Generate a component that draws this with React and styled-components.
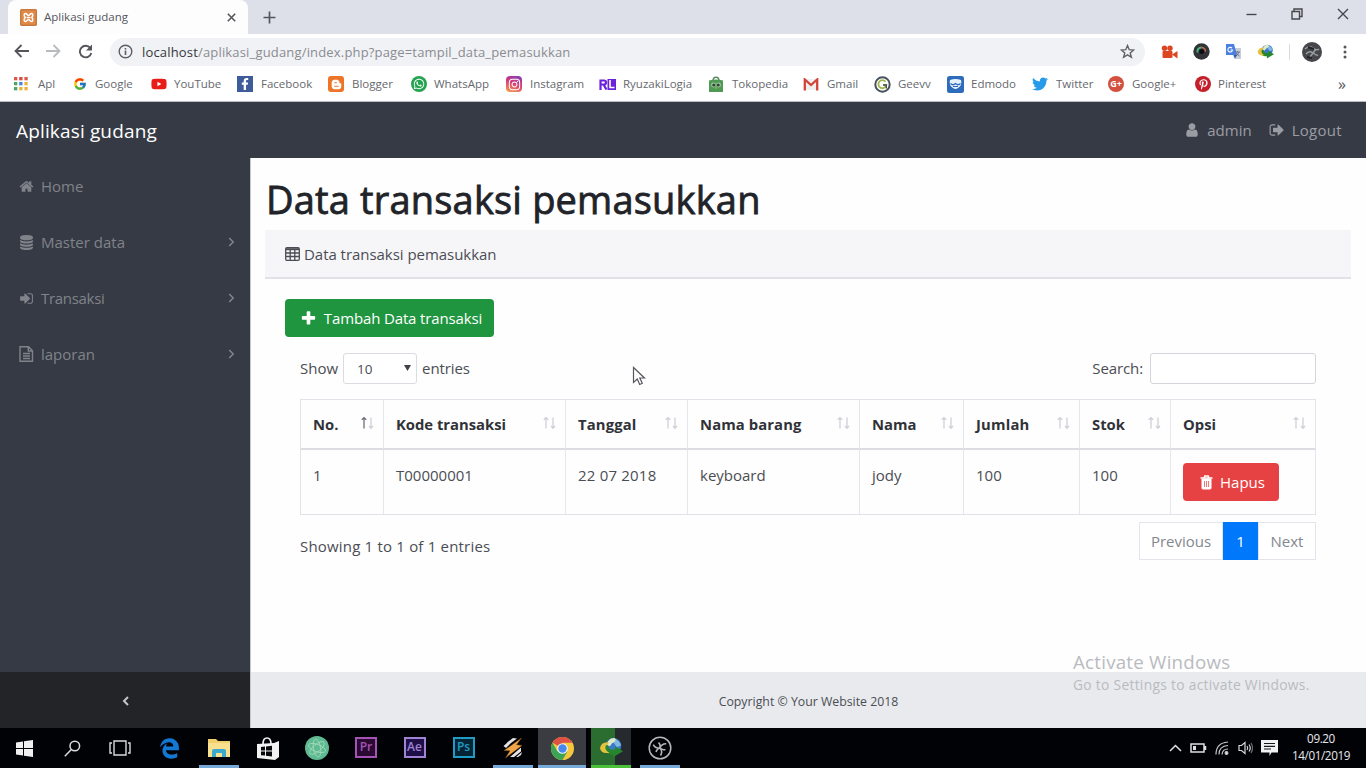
import React from "react";
import styled, { createGlobalStyle, css } from "styled-components";
import { FcGoogle } from "react-icons/fc";
import {
  FaYoutube,
  FaWhatsapp,
  FaInstagram,
  FaTwitter,
  FaPinterestP,
  FaBloggerB,
  FaFacebookF,
  FaEdgeLegacy,
} from "react-icons/fa";

const GlobalStyle = createGlobalStyle`
  * { box-sizing: border-box; }
  html, body { margin: 0; padding: 0; }
  body {
    width: 1366px;
    height: 768px;
    overflow: hidden;
    background: #fff;
    font-family: "Open Sans", "Noto Sans", sans-serif;
    font-size: 15px;
    line-height: 24px;
    color: #4b4d54;
  }
  svg { display: block; flex: none; }
`;

const Screen = styled.div`
  position: relative;
  display: flex;
  flex-direction: column;
  width: 1366px;
  height: 768px;
`;

const Text = styled.span`
  white-space: nowrap;
  letter-spacing: ${(p) => p.$ls || 0}px;
`;

/* ---------- browser chrome ---------- */

const TabStrip = styled.div`
  display: flex;
  height: 34px;
  flex: none;
  background: #dde0e8;
`;

const Tab = styled.div`
  display: flex;
  align-items: center;
  width: 240px;
  margin-left: 8px;
  padding: 0 12px 0 12px;
  border-radius: 8px 8px 0 0;
  background: #fdfdfe;
  font-size: 11.5px;
  color: #55575c;
`;

const TabTitle = styled(Text)`
  flex: 1;
  margin-left: 7px;
`;

const NewTab = styled.div`
  display: flex;
  align-items: center;
  margin-left: 15px;
`;

const WindowButtons = styled.div`
  display: flex;
  align-items: center;
  gap: 34px;
  height: 28px;
  margin-left: auto;
  padding-right: 17px;
`;

const Toolbar = styled.div`
  display: flex;
  align-items: center;
  height: 35px;
  flex: none;
  padding: 0 16px 0 14px;
  background: #fff;
`;

const NavIcons = styled.div`
  display: flex;
  gap: 17px;
  width: 96px;
`;

const AddressBar = styled.div`
  display: flex;
  align-items: center;
  flex: none;
  width: 1035px;
  height: 28px;
  padding: 0 10px 0 8px;
  border-radius: 14px;
  background: #f1f2f5;
  font-size: 13px;
  color: #8a8c92;
`;

const Url = styled(Text)`
  flex: 1;
  margin-left: 9px;
  b { font-weight: 400; color: #35373b; }
`;

const Extensions = styled.div`
  display: flex;
  align-items: center;
  margin-left: 16px;
  gap: 15px;
`;

const Profile = styled.div`
  display: flex;
  align-items: center;
  gap: 21px;
  margin-left: -3px;
`;

const Divider = styled.i`
  width: 1px;
  height: 16px;
  background: #d8dade;
`;

const Bookmarks = styled.div`
  display: flex;
  align-items: center;
  height: 33px;
  flex: none;
  padding: 0 0 2px 13px;
  background: #fff;
  border-bottom: 1px solid #b9bbc1;
  font-size: 11.5px;
  color: #66686e;
`;

const Bookmark = styled.div`
  display: flex;
  align-items: center;
  width: ${(p) => p.$w}px;
  gap: ${(p) => p.$gap || 8}px;
`;

const MoreBookmarks = styled(Text)`
  font-size: 16px;
  color: #54565b;
`;

const Badge = styled.span`
  display: flex;
  align-items: center;
  justify-content: center;
  width: 16px;
  height: 16px;
  border-radius: ${(p) => p.$r || 0}px;
  background: ${(p) => p.$bg};
  color: #fff;
  font-size: ${(p) => p.$fs || 10}px;
  line-height: 16px;
  font-weight: 700;
`;

/* ---------- application ---------- */

const Navbar = styled.header`
  display: flex;
  align-items: center;
  height: 56px;
  flex: none;
  padding: 0 24px 0 16px;
  background: #363a44;
  color: #9b9da4;
`;

const Brand = styled(Text)`
  flex: 1;
  padding-top: 2px;
  font-size: 19px;
  color: #fff;
`;

const NavLink = styled.div`
  display: flex;
  align-items: center;
  gap: 7px;
  margin-left: 17px;
`;

const Body = styled.div`
  display: flex;
  height: 570px;
  flex: none;
`;

const Sidebar = styled.nav`
  display: flex;
  flex-direction: column;
  width: 250px;
  background: #363a44;
  color: #80838a;
`;

const SideItem = styled.div`
  display: flex;
  align-items: center;
  height: 56px;
  padding: 0 15px 0 19px;
  gap: 7px;
  svg:last-child:not(:first-child) { margin-left: auto; }
`;

const Toggler = styled.div`
  display: flex;
  align-items: center;
  justify-content: center;
  height: 56px;
  margin-top: auto;
  padding-top: 2px;
  background: #222428;
  color: #c5c6c9;
`;

const Main = styled.main`
  display: flex;
  flex-direction: column;
  flex: 1;
  border-left: 1px solid #c6c8cf;
  background: #fefefe;
`;

const Title = styled.h1`
  margin: 16px 0 0 15px;
  height: 56px;
  font-size: 38px;
  line-height: 50px;
  font-weight: 400;
  color: #212329;
  white-space: nowrap;
  letter-spacing: 0.18px;
  -webkit-text-stroke: 0.8px #212329;
`;

const CardHeader = styled.div`
  display: flex;
  align-items: center;
  gap: 4px;
  height: 49px;
  margin: 0 15px 0 14px;
  padding: 0 0 0 20px;
  background: #f6f6f9;
  border-bottom: 2px solid #e2e2e6;
`;

const Button = styled.button`
  display: flex;
  align-items: center;
  justify-content: center;
  width: ${(p) => p.$w}px;
  height: 38px;
  padding: 0 0 0 3px;
  gap: 7px;
  border: 0;
  border-radius: 4px;
  background: ${(p) => p.$bg};
  color: #fff;
  font: inherit;
`;

const CardBody = styled.section`
  margin: 20px 50px 0 34px;
`;

const Controls = styled.div`
  display: flex;
  align-items: center;
  height: 31px;
  margin: 16px 0 15px 15px;
`;

const ControlLabel = styled(Text)`
  padding-bottom: 2px;
`;

const Select = styled.div`
  display: flex;
  align-items: center;
  justify-content: space-between;
  width: 74px;
  height: 31px;
  margin: 0 5px;
  padding: 0 5px 0 13px;
  border: 1px solid #dadce1;
  border-radius: 3px;
  background: #fff;
  font-size: 13.5px;
  svg { margin-bottom: 1px; }
`;

const SearchBox = styled.div`
  width: 166px;
  height: 31px;
  margin-left: 7px;
  border: 1px solid #d4d5da;
  border-radius: 3px;
  background: #fff;
`;

const Spacer = styled.div`
  flex: 1;
`;

const Table = styled.div`
  display: grid;
  grid-template-columns: 83px 182px 122px 172px 104px 116px 91px 145px;
  grid-template-rows: 50px 64px;
  width: 1016px;
  margin-left: 15px;
  border: solid #e2e2e8;
  border-width: 1px 0 1px 1px;
`;

const Cell = styled.div`
  display: flex;
  padding: 0 8px 0 12px;
  border-right: 1px solid #e6e6ec;
  ${(p) =>
    p.$head
      ? css`
          align-items: center;
          justify-content: space-between;
          border-bottom: 2px solid #dcdce3;
          font-weight: 700;
          font-size: 14.8px;
          color: #303238;
          svg { margin-bottom: 3px; }
        `
      : css`
          padding-top: 13px;
        `}
`;

const TableFooter = styled.div`
  display: flex;
  justify-content: space-between;
  margin: 7px 0 0 15px;
`;

const Info = styled(Text)`
  padding-top: 12px;
`;

const Pager = styled.div`
  display: flex;
  height: 38px;
`;

const Page = styled.span`
  display: flex;
  align-items: center;
  justify-content: center;
  width: ${(p) => p.$w}px;
  border: 1px solid ${(p) => (p.$active ? "#0078fb" : "#e4e5ea")};
  background: ${(p) => (p.$active ? "#0078fb" : "#fff")};
  color: ${(p) => (p.$active ? "#fff" : "#84878e")};
`;

const Footer = styled.footer`
  display: flex;
  align-items: center;
  justify-content: center;
  height: 56px;
  margin-top: auto;
  padding: 4px 0 0;
  background: #e8eaee;
  font-size: 12.3px;
  color: #4b4d54;
`;

/* ---------- desktop ---------- */

const Taskbar = styled.div`
  display: flex;
  align-items: stretch;
  height: 40px;
  flex: none;
  background: #010206;
  color: #e8e8ea;
`;

const Task = styled.div`
  display: flex;
  align-items: center;
  justify-content: center;
  height: 40px;
  width: ${(p) => p.$w || 49}px;
  background: ${(p) => p.$bg || "transparent"};
`;

const TaskInner = styled.div`
  display: flex;
  align-items: center;
  justify-content: center;
  width: 40px;
  height: 40px;
  ${(p) =>
    p.$line &&
    css`
      box-shadow: inset 0 -3px 0 ${p.$line};
    `}
`;

const AdobeTile = styled.span`
  display: flex;
  align-items: center;
  justify-content: center;
  width: 22px;
  height: 21px;
  border: 2px solid ${(p) => p.$c};
  background: ${(p) => p.$bg};
  color: ${(p) => p.$c};
  font-size: 12px;
  line-height: 16px;
  margin-bottom: 2px;
  font-weight: 600;
`;

const Tray = styled.div`
  display: flex;
  align-items: center;
  gap: 8px;
  margin-left: auto;
`;

const Clock = styled.div`
  width: 60px;
  height: 36px;
  margin: 0 15px 0 5px;
  text-align: center;
  font-size: 11.7px;
  line-height: 17px;
  letter-spacing: -0.4px;
  white-space: nowrap;
`;

const Watermark = styled.div`
  position: absolute;
  left: 1073px;
  top: 649px;
  color: #b9bbc0;
  font-size: 13.8px;
  line-height: 22px;
`;

const WatermarkTitle = styled(Text)`
  display: block;
  font-size: 18.7px;
  line-height: 25px;
`;

const Cursor = styled.svg`
  position: absolute;
  left: 632px;
  top: 366px;
`;

/* ---------- icons ---------- */

const paths = {
  home: "M1472 992v480q0 26-19 45t-45 19h-384v-384h-256v384h-384q-26 0-45-19t-19-45v-480q0-1 .5-3t.5-3l575-474 575 474q1 2 1 6zm223-69l-62 74q-8 9-21 11h-3q-13 0-21-7l-692-577-692 577q-12 8-24 7-13-2-21-11l-62-74q-8-10-7-23.5t11-21.5l719-599q32-26 76-26t76 26l244 204v-195q0-14 9-23t23-9h192q14 0 23 9t9 23v408l219 182q10 8 11 21.5t-7 23.5z",
  database: "M896 768q237 0 443-43t325-127v170q0 69-103 128t-280 93.5-385 34.5-385-34.5-280-93.5-103-128v-170q119 84 325 127t443 43zm0 768q237 0 443-43t325-127v170q0 69-103 128t-280 93.5-385 34.5-385-34.5-280-93.5-103-128v-170q119 84 325 127t443 43zm0-384q237 0 443-43t325-127v170q0 69-103 128t-280 93.5-385 34.5-385-34.5-280-93.5-103-128v-170q119 84 325 127t443 43zm0-1152q208 0 385 34.5t280 93.5 103 128v128q0 69-103 128t-280 93.5-385 34.5-385-34.5-280-93.5-103-128v-128q0-69 103-128t280-93.5 385-34.5z",
  user: "M1536 1399q0 109-62.5 187t-150.5 78h-854q-88 0-150.5-78t-62.5-187q0-85 8.5-160.5t31.5-152 58.5-131 94-89 134.5-34.5q131 128 313 128t313-128q76 0 134.5 34.5t94 89 58.5 131 31.5 152 8.5 160.5zm-256-887q0 159-112.5 271.5t-271.5 112.5-271.5-112.5-112.5-271.5 112.5-271.5 271.5-112.5 271.5 112.5 112.5 271.5z",
  plus: "M1600 736v192q0 40-28 68t-68 28h-416v416q0 40-28 68t-68 28h-192q-40 0-68-28t-28-68v-416h-416q-40 0-68-28t-28-68v-192q0-40 28-68t68-28h416v-416q0-40 28-68t68-28h192q40 0 68 28t28 68v416h416q40 0 68 28t28 68z",
  signIn: "M1312 896q0 26-19 45l-544 544q-19 19-45 19t-45-19-19-45v-288h-448q-26 0-45-19t-19-45v-384q0-26 19-45t45-19h448v-288q0-26 19-45t45-19 45 19l544 544q19 19 19 45zm352-352v704q0 119-84.5 203.5t-203.5 84.5h-320q-13 0-22.5-9.5t-9.5-22.5q0-4-1-20t-.5-26.5 3-23.5 10-19.5 20.5-6.5h320q66 0 113-47t47-113v-704q0-66-47-113t-113-47h-312l-11.5-1-11.5-3-8-5.5-7-9-2-13.5q0-4-1-20t-.5-26.5 3-23.5 10-19.5 20.5-6.5h320q119 0 203.5 84.5t84.5 203.5z",
  signOut: "M704 1440q0 4 1 20t.5 26.5-3 23.5-10 19.5-20.5 6.5h-320q-119 0-203.5-84.5t-84.5-203.5v-704q0-119 84.5-203.5t203.5-84.5h320q13 0 22.5 9.5t9.5 22.5q0 4 1 20t.5 26.5-3 23.5-10 19.5-20.5 6.5h-320q-66 0-113 47t-47 113v704q0 66 47 113t113 47h312l11.5 1 11.5 3 8 5.5 7 9 2 13.5zm928-544q0 26-19 45l-544 544q-19 19-45 19t-45-19-19-45v-288h-448q-26 0-45-19t-19-45v-384q0-26 19-45t45-19h448v-288q0-26 19-45t45-19 45 19l544 544q19 19 19 45z",
};

const Glyph = ({ name, size = 16 }) => (
  <svg width={size} height={size} viewBox="0 0 1792 1792" fill="currentColor">
    <path d={paths[name]} />
  </svg>
);

const FileIcon = () => (
  <svg width="15" height="16" viewBox="0 0 15 16" fill="none" stroke="currentColor" strokeWidth="1.4">
    <path d="M1 .8h8.5l4 4v10.5H1zM9.300 .8V5h4.200M4 7.500h7M4 10h7M4 12.500h7" />
  </svg>
);

const TableIcon = () => (
  <svg width="15" height="14" viewBox="0 0 15 14" fill="none" stroke="currentColor" strokeWidth="1.300">
    <rect x=".7" y=".7" width="13.600" height="12.600" rx="1.200" />
    <path d="M1 2.200h13" strokeWidth="2" />
    <path d="M1 6h13M1 9.500h13M5.200 2v11M9.800 2v11" />
  </svg>
);

const TrashIcon = () => (
  <svg width="13" height="15" viewBox="0 0 13 15" fill="none" stroke="currentColor">
    <path d="M.5 3h12M4 3l.8-2h3.400L9 3" strokeWidth="1.500" />
    <path d="M2 4h9v9.200q0 .8-.8.8H2.800q-.8 0-.8-.8z" fill="currentColor" />
    <path d="M4.500 6v6M6.500 6v6M8.500 6v6" stroke="#e74243" strokeWidth=".7" />
  </svg>
);

const Chevron = ({ left }) => (
  <svg width="7" height="10" viewBox="0 0 7 10" fill="none" stroke="currentColor" strokeWidth={left ? 2 : 1.600}>
    <path d={left ? "M6 1L2 5l4 4" : "M1.200 1l4 4-4 4"} />
  </svg>
);

const SortIcon = ({ active }) => (
  <svg width="15" height="14" viewBox="0 0 15 14" fill="none" strokeWidth="1.300">
    <path d="M4 12.500V2M1.800 3.800L4 1.600l2.200 2.200" stroke={active ? "#6c6e78" : "#cfd0d8"} />
    <path d="M11 1.500v10.500M9 10L11 12.200 13 10" stroke="#cfd0d8" />
  </svg>
);

const XamppIcon = () => (
  <svg width="17" height="17" viewBox="0 0 17 17">
    <rect width="17" height="17" rx="2" fill="#e08a4a" />
    <rect x=".7" y=".7" width="15.600" height="15.600" rx="1.500" fill="none" stroke="#c9783d" strokeWidth="1.400" />
    <path d="M5.500 4.500c1.500 0 2 2 3 2s1.500-2 3-2 1.800 2 .4 4c1.400 2 1.100 4-.4 4s-2-2-3-2-1.500 2-3 2-1.800-2-.4-4c-1.400-2-1.100-4 .4-4z" fill="none" stroke="#fff" strokeWidth="1.500" />
    <path d="M6.500 8.500h4" stroke="#fff" strokeWidth="1.300" />
  </svg>
);

const AppsIcon = () => {
  const colors = ["#e0564c", "#d64b3f", "#e0564c", "#4aa567", "#4485d8", "#e9b23c", "#4aa567", "#e9b23c", "#e9b23c"];
  return (
    <svg width="16" height="14" viewBox="0 0 16 14">
      {colors.map((c, i) => (
        <rect key={i} x={1 + (i % 3) * 5.200} y={Math.floor(i / 3) * 5} width="3.300" height="3.300" fill={c} />
      ))}
    </svg>
  );
};

const TokopediaIcon = () => (
  <svg width="16" height="17" viewBox="0 0 16 17">
    <path d="M5 5c0-5 6-5 6 0" fill="none" stroke="#5b8a60" strokeWidth="1.400" />
    <path d="M1 4.500q7-2 14 0V16H1z" fill="#4f9a55" />
    <circle cx="5.500" cy="9" r="2.400" fill="#a9c9aa" /><circle cx="10.500" cy="9" r="2.400" fill="#a9c9aa" />
    <circle cx="5.800" cy="9" r="1.600" fill="#2c4a33" /><circle cx="10.200" cy="9" r="1.600" fill="#2c4a33" />
    <path d="M7 11.500h2l-1 1.500z" fill="#e6b955" />
  </svg>
);

const GmailIcon = () => (
  <svg width="16" height="13" viewBox="0 0 16 13">
    <rect x="1" y="1" width="14" height="11" fill="#f1eeee" />
    <path d="M1.800 12.500V1.500L8 7l6.200-5.500v11" fill="none" stroke="#d0443a" strokeWidth="2.300" />
  </svg>
);

const GeevvIcon = () => (
  <svg width="17" height="17" viewBox="0 0 17 17" fill="none">
    <circle cx="8.500" cy="8.500" r="7.200" stroke="#45525e" strokeWidth="2" />
    <path d="M11.500 5.700A4 4 0 1 0 12.300 9H9" stroke="#a0b64a" strokeWidth="1.800" />
    <path d="M9 9h3.300v3.500" stroke="#45525e" strokeWidth="1.400" />
  </svg>
);

const EdmodoIcon = () => (
  <svg width="17" height="17" viewBox="0 0 17 17">
    <rect width="17" height="17" rx="2.500" fill="#2d6bbb" />
    <path d="M3 4q5.500-2 11 0 1.500 5-3 8-2.500 2-5 0-4.500-3-3-8z" fill="#e9f1fb" />
    <path d="M3.500 7.500q2.500 2.500 5 0 2.500 2.500 5 0M6 10.500h5" fill="none" stroke="#2d6bbb" strokeWidth="1.200" />
  </svg>
);

const BackIcon = ({ forward }) => (
  <svg width="15" height="14" viewBox="0 0 15 14" fill="none" stroke={forward ? "#b9bbbf" : "#54565b"} strokeWidth="1.800">
    <path d={forward ? "M0 7h13M7.500 1l6 6-6 6" : "M15 7H2M7.500 1l-6 6 6 6"} />
  </svg>
);

const ReloadIcon = () => (
  <svg width="15" height="15" viewBox="0 0 15 15" fill="none">
    <path d="M12.300 4A5.800 5.800 0 1 0 13.300 9" stroke="#54565b" strokeWidth="1.900" />
    <path d="M14 .5V6.500H8z" fill="#54565b" />
  </svg>
);

const InfoIcon = () => (
  <svg width="15" height="15" viewBox="0 0 15 15" fill="none" stroke="#5c5e63" strokeWidth="1.400">
    <circle cx="7.500" cy="7.500" r="6.300" /><path d="M7.500 6.600V11M7.500 4v1.500" strokeWidth="1.600" />
  </svg>
);

const StarIcon = () => (
  <svg width="15" height="15" viewBox="0 0 15 15" fill="none" stroke="#606267" strokeWidth="1.400">
    <path d="M7.500 1.500l1.700 4.200 4.500.3-3.500 2.900 1.200 4.400-3.900-2.500-3.900 2.500 1.200-4.400L1.300 6l4.500-.3z" />
  </svg>
);

const CameraIcon = () => (
  <svg width="17" height="14" viewBox="0 0 17 14" fill="#dc4620">
    <circle cx="3.500" cy="3.200" r="2.700" /><circle cx="9" cy="3.200" r="2.700" />
    <rect x="1.500" y="6" width="10" height="7" rx="1" /><path d="M11 9.500l5.500-3.500v7.500z" />
  </svg>
);

const LensIcon = () => (
  <svg width="17" height="17" viewBox="0 0 17 17" fill="none">
    <circle cx="8.500" cy="8.500" r="8.200" fill="#303338" />
    <path d="M4.500 9.500a4 4 0 0 1 4-5" stroke="#49b77b" strokeWidth="2" />
    <path d="M8.500 4.500a4 4 0 0 1 4 4" stroke="#d86a55" strokeWidth="1.500" />
    <circle cx="8.700" cy="8.700" r="2.400" fill="#0c0d10" />
  </svg>
);

const TranslateIcon = () => (
  <svg width="17" height="17" viewBox="0 0 17 17">
    <path d="M7 5h9v11H9z" fill="#c9ced8" />
    <path d="M1 1h8l3 11H1z" fill="#4a80e2" />
    <path d="M7 5.200A2.300 2.300 0 1 0 7.500 7H5.500" fill="none" stroke="#fff" strokeWidth="1.100" />
    <path d="M10 9h5M12.500 8v1M14 9q-1 3-3.500 4M11.500 10q1 2 3 3" fill="none" stroke="#68707d" strokeWidth=".9" />
    <path d="M8.500 12H12l-2 3.500z" fill="#2b58b5" />
  </svg>
);

const IdmIcon = ({ size = 17 }) => (
  <svg width={size} height={size * 0.9} viewBox="0 0 24 21">
    <circle cx="14.500" cy="8.500" r="7.800" fill="#3b79c7" />
    <path d="M9 4q3-4 7-3l2 3-5 2-2 3-3-1z" fill="#dfe9c8" />
    <path d="M17 2q4 2 5 6l-4 2-3-4z" fill="#7fb7e8" />
    <path d="M4 8q6-2 6 3 2 2 6 1v-3l8 5-10 6v-3Q5 18 4 8z" fill="#25862d" />
    <path d="M1 11Q2 4 10 5L6.500 9q-1 4 4 6.500Q2 17 1 11z" fill="#e5c13e" />
  </svg>
);

const AvatarIcon = () => (
  <svg width="20" height="20" viewBox="0 0 20 20" fill="none">
    <circle cx="10" cy="10" r="10" fill="#45474a" />
    <path d="M3 7q4-4 8-1t6 1M4 12q3-4 7-1t5 2M8 15l6-8" stroke="#9b9da0" strokeWidth="1.500" />
    <path d="M6 5l6 2M5 15l5 1" stroke="#222427" strokeWidth="2" />
  </svg>
);

const StoreIcon = () => (
  <svg width="22" height="24" viewBox="0 0 22 24">
    <path d="M6 8q0-6 4-6t4 6" fill="none" stroke="#f2f2f2" strokeWidth="1.700" />
    <path d="M0 8l17-1 5-2v16l-4 3-18-2z" fill="#f2f2f2" />
    <path d="M4 11l4-.4v4H4zM9 10.500l6-.7v4.800H9zM4 15.600h4v4l-4-.4zM9 15.600h6v4.800l-6-.7z" fill="#08090c" />
  </svg>
);

const AtomIcon = () => (
  <svg width="24" height="24" viewBox="0 0 24 24" fill="none">
    <circle cx="12" cy="12" r="12" fill="#5fba92" />
    <g stroke="#a3dcbd" strokeWidth=".8">
      <ellipse cx="12" cy="12" rx="9" ry="3.600" transform="rotate(20 12 12)" />
      <ellipse cx="12" cy="12" rx="9" ry="3.600" transform="rotate(80 12 12)" />
      <ellipse cx="12" cy="12" rx="9" ry="3.600" transform="rotate(140 12 12)" />
    </g>
  </svg>
);

const ExplorerIcon = () => (
  <svg width="22" height="19" viewBox="0 0 22 19">
    <path d="M0 0h8l2 2h12v16H0z" fill="#f0cf6c" />
    <path d="M0 4h22v14H0z" fill="#f9e08e" />
    <path d="M4 18v-6q0-2 2-2h10q2 0 2 2v6h-4v-4H8v4z" fill="#3aa9cf" />
  </svg>
);

const WinampIcon = () => (
  <svg width="22" height="22" viewBox="0 0 22 22">
    <path d="M1.500 9L9 2.500l4-.5-9 9zM5 5.500L11 1l4 .5-8 6zM8 20l11-9.500v4L12 20zM14 20l6-5-1 3-3 2z" fill="#e4e4e4" />
    <path d="M19.500 1L2 13.500l6 .3L3.500 21 20 8.500l-5.500-.8z" fill="#f0a54a" stroke="#7b4c14" strokeWidth=".5" />
  </svg>
);

const ChromeIcon = () => (
  <svg width="23" height="23" viewBox="0 0 24 24">
    <circle cx="12" cy="12" r="12" fill="#f5c83b" />
    <path d="M12 12L1.600 6A12 12 0 0 1 22.400 6H12z" fill="#de5145" />
    <path d="M1.600 6A12 12 0 0 0 12 24l5.200-9L12 12 6.800 15z" fill="#3ba457" />
    <circle cx="12" cy="12" r="5.600" fill="#f5f5f5" />
    <circle cx="12" cy="12" r="4.400" fill="#4688ee" />
  </svg>
);

const ObsIcon = () => (
  <svg width="24" height="24" viewBox="0 0 24 24" fill="none" stroke="#b6b7b9" strokeWidth="1.500">
    <circle cx="12" cy="12" r="10.800" />
    {[60, 180, 300].map((a) => (
      <path key={a} d="M12 12Q9 8.500 11.500 4.500M12 12q3-.5 4-4" transform={`rotate(${a} 12 12)`} />
    ))}
  </svg>
);

const RyuzakiMark = () => (
  <svg width="17" height="11" viewBox="0 0 17 11" fill="none">
    <rect x="8.500" width="8.500" height="11" fill="#6a22dc" />
    <path d="M1.500 11V1.500h3.500q2 0 2 2t-2 2H2M4.500 5.500L7.500 10.500" stroke="#6a22dc" strokeWidth="2.200" />
    <path d="M11 1v7.500h4.500" stroke="#fff" strokeWidth="1.600" />
  </svg>
);

/* ---------- data ---------- */

const bookmarks = [
  { w: 60, label: "Apl", icon: <AppsIcon />, gap: 9 },
  { w: 78, label: "Google", icon: <FcGoogle size={14} /> },
  { w: 86, label: "YouTube", icon: <FaYoutube size={16} color="#e91d17" />, gap: 7 },
  { w: 91, label: "Facebook", icon: <Badge $bg="#3f5c9a"><FaFacebookF size={12} /></Badge> },
  { w: 83, label: "Blogger", icon: <Badge $bg="#ee7428" $r={3}><FaBloggerB size={11} /></Badge> },
  { w: 95, label: "WhatsApp", icon: <Badge $bg="#24a350" $r={8}><FaWhatsapp size={12} /></Badge>, gap: 7 },
  { w: 93, label: "Instagram", icon: <Badge $bg="linear-gradient(200deg,#7a3fc4,#d83877 45%,#f5a24b)" $r={4}><FaInstagram size={13} /></Badge> },
  { w: 109, label: "RyuzakiLogia", icon: <Badge $bg="#fff" $fs={11}><RyuzakiMark /></Badge> },
  { w: 95, label: "Tokopedia", icon: <TokopediaIcon /> },
  { w: 71, label: "Gmail", icon: <GmailIcon /> },
  { w: 73, label: "Geevv", icon: <GeevvIcon />, gap: 7 },
  { w: 85, label: "Edmodo", icon: <EdmodoIcon />, gap: 7 },
  { w: 76, label: "Twitter", icon: <FaTwitter size={16} color="#269ce9" /> },
  { w: 87, label: "Google+", icon: <Badge $bg="#d3503f" $r={8} $fs={9}>G+</Badge> },
  { w: 143, label: "Pinterest", icon: <Badge $bg="#c4202c" $r={8}><FaPinterestP size={11} /></Badge>, gap: 7 },
];

const columns = [
  { head: "No.", value: "1", active: true },
  { head: "Kode transaksi", value: "T00000001" },
  { head: "Tanggal", value: "22 07 2018", hls: 0.15, ls: 0.2 },
  { head: "Nama barang", value: "keyboard", hls: 0.1 },
  { head: "Nama", value: "jody" },
  { head: "Jumlah", value: "100", hls: 0.2 },
  { head: "Stok", value: "100" },
];

/* ---------- page ---------- */

export default function App() {
  return (
    <Screen>
      <GlobalStyle />
      <TabStrip>
        <Tab>
          <XamppIcon />
          <TabTitle>Aplikasi gudang</TabTitle>
          <svg width="9" height="9" viewBox="0 0 9 9" stroke="#54565b" strokeWidth="1.600"><path d="M.8.8l7.400 7.400M8.200.8L.8 8.200" /></svg>
        </Tab>
        <NewTab>
          <svg width="13" height="13" viewBox="0 0 13 13" stroke="#54565b" strokeWidth="1.700"><path d="M6.500.5v12M.5 6.500h12" /></svg>
        </NewTab>
        <WindowButtons>
          <svg width="11" height="11" viewBox="0 0 11 11" stroke="#45474c" strokeWidth="1.400"><path d="M.5 5.500h10" /></svg>
          <svg width="12" height="12" viewBox="0 0 12 12" fill="none" stroke="#45474c" strokeWidth="1.400"><path d="M1 3.500h7.500V11H1zM3 3.500V1h8v7.500H8.500" /></svg>
          <svg width="12" height="12" viewBox="0 0 12 12" stroke="#45474c" strokeWidth="1.400"><path d="M1 1l10 10M11 1L1 11" /></svg>
        </WindowButtons>
      </TabStrip>
      <Toolbar>
        <NavIcons><BackIcon /><BackIcon forward /><ReloadIcon /></NavIcons>
        <AddressBar>
          <InfoIcon />
          <Url $ls={0.17}><b>localhost</b>/aplikasi_gudang/index.php?page=tampil_data_pemasukkan</Url>
          <StarIcon />
        </AddressBar>
        <Extensions>
          <CameraIcon /><LensIcon /><TranslateIcon /><IdmIcon />
          <Divider />
          <Profile>
            <AvatarIcon />
            <svg width="4" height="14" viewBox="0 0 4 14" fill="#54565b"><circle cx="2" cy="2" r="1.500" /><circle cx="2" cy="7" r="1.500" /><circle cx="2" cy="12" r="1.500" /></svg>
          </Profile>
        </Extensions>
      </Toolbar>
      <Bookmarks>
        {bookmarks.map((b) => (
          <Bookmark key={b.label} $w={b.w} $gap={b.gap}>
            {b.icon}
            <Text>{b.label}</Text>
          </Bookmark>
        ))}
        <MoreBookmarks>»</MoreBookmarks>
      </Bookmarks>

      <Navbar>
        <Brand $ls={0.15}>Aplikasi gudang</Brand>
        <NavLink><Glyph name="user" /><Text>admin</Text></NavLink>
        <NavLink><Glyph name="signOut" /><Text $ls={0.3}>Logout</Text></NavLink>
      </Navbar>

      <Body>
        <Sidebar>
          <SideItem><Glyph name="home" size={15} /><Text>Home</Text></SideItem>
          <SideItem><Glyph name="database" size={15} /><Text>Master data</Text><Chevron /></SideItem>
          <SideItem><Glyph name="signIn" size={15} /><Text $ls={-0.3}>Transaksi</Text><Chevron /></SideItem>
          <SideItem><FileIcon /><Text>laporan</Text><Chevron /></SideItem>
          <Toggler><Chevron left /></Toggler>
        </Sidebar>
        <Main>
          <Title>Data transaksi pemasukkan</Title>
          <CardHeader><TableIcon /><Text $ls={-0.04}>Data transaksi pemasukkan</Text></CardHeader>
          <CardBody>
            <Button $w={209} $bg="#20953f"><Glyph name="plus" size={17} /><Text $ls={-0.14}>Tambah Data transaksi</Text></Button>
            <Controls>
              <ControlLabel>Show</ControlLabel>
              <Select>
                10
                <svg width="7" height="6" viewBox="0 0 7 6" fill="#404248"><path d="M0 0h7L3.500 6z" /></svg>
              </Select>
              <ControlLabel $ls={-0.1}>entries</ControlLabel>
              <Spacer />
              <ControlLabel $ls={-0.1}>Search:</ControlLabel>
              <SearchBox />
            </Controls>
            <Table>
              {columns.map((c) => (
                <Cell key={c.head} $head><Text $ls={c.hls}>{c.head}</Text><SortIcon active={c.active} /></Cell>
              ))}
              <Cell $head><Text>Opsi</Text><SortIcon /></Cell>
              {columns.map((c) => (
                <Cell key={c.head}><Text $ls={c.ls}>{c.value}</Text></Cell>
              ))}
              <Cell><Button $w={96} $bg="#e74243"><TrashIcon /><Text>Hapus</Text></Button></Cell>
            </Table>
            <TableFooter>
              <Info $ls={0.19}>Showing 1 to 1 of 1 entries</Info>
              <Pager>
                <Page $w={84}>Previous</Page>
                <Page $w={35} $active>1</Page>
                <Page $w={58}>Next</Page>
              </Pager>
            </TableFooter>
          </CardBody>
          <Footer><Text>Copyright © Your Website 2018</Text></Footer>
        </Main>
      </Body>

      <Taskbar>
        <Task $w={48}>
          <svg width="17" height="17" viewBox="0 0 17 17" fill="#f0f0f0"><path d="M0 2.500l7-1v6.500H0zM8 1.300L17 0v8H8zM0 9h7v6.500l-7-1zM8 9h9v8l-9-1.300z" /></svg>
        </Task>
        <Task $w={48}>
          <svg width="17" height="17" viewBox="0 0 17 17" fill="none" stroke="#dcdcde" strokeWidth="1.500"><circle cx="10.800" cy="6" r="4.800" /><path d="M7.300 9.500L.8 16.200" /></svg>
        </Task>
        <Task $w={48}>
          <svg width="22" height="16" viewBox="0 0 22 16" fill="none" stroke="#dcdcde" strokeWidth="1.400"><path d="M5 1h12v14H5zM3 3H1v10h2M19 3h2v10h-2" /></svg>
        </Task>
        <Task $w={51}><FaEdgeLegacy size={21} color="#1377d4" /></Task>
        <Task $w={48}><TaskInner $line="#76a9d8"><ExplorerIcon /></TaskInner></Task>
        <Task $w={49}><StoreIcon /></Task>
        <Task $w={50}><AtomIcon /></Task>
        <Task $w={48}><AdobeTile $c="#a553b5" $bg="#2a0a33">Pr</AdobeTile></Task>
        <Task $w={49}><AdobeTile $c="#a084d2" $bg="#1f0f49">Ae</AdobeTile></Task>
        <Task $w={49}><AdobeTile $c="#1f9cc4" $bg="#052436">Ps</AdobeTile></Task>
        <Task $w={50}><TaskInner $line="#76a9d8"><WinampIcon /></TaskInner></Task>
        <Task $w={48} $bg="linear-gradient(#76a9d8,#76a9d8) bottom/100% 3px no-repeat #3a3c42"><ChromeIcon /></Task>
        <Task $w={49}>
          <Task $w={40} $bg="linear-gradient(#4bc13a,#4bc13a) bottom/100% 3px no-repeat, linear-gradient(90deg,#2b6c31 60%,#26292d 60%)"><IdmIcon size={24} /></Task>
        </Task>
        <Task $w={49}><TaskInner $line="#76a9d8"><ObsIcon /></TaskInner></Task>
        <Tray>
          <svg width="13" height="8" viewBox="0 0 13 8" fill="none" stroke="#e0e0e2" strokeWidth="1.500"><path d="M1 7l5.500-5.500L12 7" /></svg>
          <svg width="17" height="10" viewBox="0 0 17 10" fill="none" stroke="#e0e0e2" strokeWidth="1.500"><path d="M1 1h13v8H1zM15.500 3v4" /><path d="M3 3h3v4H3z" fill="#e0e0e2" stroke="none" /></svg>
          <svg width="15" height="14" viewBox="0 0 15 14" fill="none" stroke="#c8c8ca" strokeWidth="1.200"><path d="M1 13.500Q1 2 13 1M4 13.500Q4 5 13 4.500M7 13.500Q7.500 8 13 8" /><circle cx="11.500" cy="12" r="1.400" fill="#e0e0e2" /></svg>
          <svg width="15" height="14" viewBox="0 0 15 14" fill="none" stroke="#d8d8da" strokeWidth="1.200"><path d="M1 4.500h2.500L7 1.500v11L3.500 9.500H1z" /><path d="M9 5q1.500 2 0 4M11 3.500q2.500 3.500 0 7" /><path d="M13 2q3 5 0 10" stroke="#6c6d70" /></svg>
          <svg width="17" height="16" viewBox="0 0 17 16"><path d="M0 0h17v12.500H10.500L8.500 16V12.500H0z" fill="#f2f2f2" /><path d="M3 3.500h11M3 6.300h11M3 9h7" stroke="#17181c" strokeWidth="1.200" /></svg>
          <Clock>09.20<br />14/01/2019</Clock>
        </Tray>
      </Taskbar>

      <Watermark>
        <WatermarkTitle $ls={0.25}>Activate Windows</WatermarkTitle>
        <Text $ls={0.3}>Go to Settings to activate Windows.</Text>
      </Watermark>
      <Cursor width="14" height="20" viewBox="0 0 14 20">
        <path d="M1.500 1.500v15l3.800-3.500 2.400 5.500 2.600-1.200-2.500-5.300h4.700z" fill="#fff" stroke="#55575c" strokeWidth="1.200" />
      </Cursor>
    </Screen>
  );
}
